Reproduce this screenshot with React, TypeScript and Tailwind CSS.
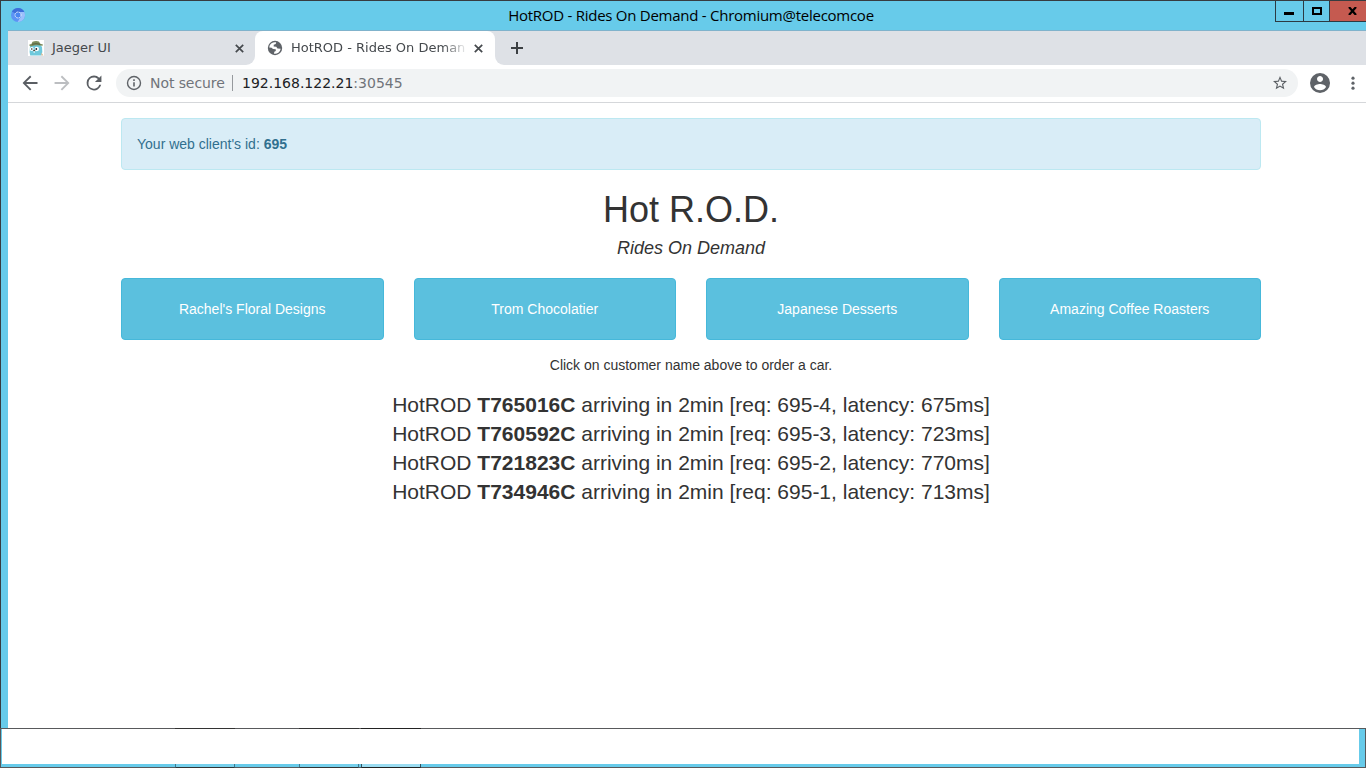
import React from 'react';

const customers = ["Rachel's Floral Designs", 'Trom Chocolatier', 'Japanese Desserts', 'Amazing Coffee Roasters'];

const rides = [
  { car: 'T765016C', req: '695-4', latency: 675 },
  { car: 'T760592C', req: '695-3', latency: 723 },
  { car: 'T721823C', req: '695-2', latency: 770 },
  { car: 'T734946C', req: '695-1', latency: 713 },
];

function ChromiumIcon() {
  return (
    <svg className="ml-[10px] mt-[7px] size-[14px] shrink-0" viewBox="0 0 14 14">
      <circle cx="7" cy="7" r="7" fill="#5b93f5" />
      <path d="M7 7 L.9 3.6 A7 7 0 0 1 13.3 4 Z" fill="#3d6fd9" />
      <path d="M7 4 H13.3 A7 7 0 0 1 6.6 14 L10 8.5 Z" fill="#9cc0fb" />
      <circle cx="7" cy="7" r="3" fill="#4a86f0" stroke="#e6effd" strokeWidth="1" strokeDasharray="1.6 .8" />
    </svg>
  );
}

function GopherIcon() {
  return (
    <svg className="size-4 shrink-0" viewBox="0 0 16 16">
      <rect width="16" height="16" fill="#fff" />
      <path d="M2 6 L3 4.5 H12 L14 7 L14.3 12 L13.4 15.6 H2.2 L1.6 12 Z" fill="#6fc9dc" />
      <path d="M.8 5 L3.6 3.8 L4.5 1.7 Q8 .4 11 1.5 L12.2 3.8 L15 4.6 L14.5 5.8 Q8 4.6 3 6.4 Z" fill="#7d8d5d" />
      <path d="M4 4.3 Q8 3 12.3 4.3" stroke="#55603f" strokeWidth="1" fill="none" />
      <circle cx="3.8" cy="9" r="1.9" fill="#fff" />
      <circle cx="8.8" cy="9" r="2.2" fill="#fff" />
      <circle cx="3.8" cy="9" r=".8" fill="#222" />
      <circle cx="8.3" cy="9" r=".9" fill="#222" />
      <ellipse cx="6.2" cy="10.6" rx="1.1" ry=".8" fill="#514539" />
      <rect x="5.5" y="11.3" width="1.4" height="1.3" fill="#fff" />
      <path d="M13.3 12.5 L15.6 15.6 H13.3 Z" fill="#d9b994" />
    </svg>
  );
}

function CloseIcon() {
  return (
    <svg className="size-[9px] shrink-0" viewBox="0 0 9 9">
      <path d="M.8 .8 L8.2 8.2 M8.2 .8 L.8 8.2" stroke="#45494d" strokeWidth="1.7" />
    </svg>
  );
}

function TabStrip() {
  return (
    <div className="flex h-[34px] bg-white font-['DejaVu_Sans',sans-serif] text-[13px] text-[#45494d]">
      <div className="flex w-[247px] items-center rounded-br-[9px] bg-[#dee1e6] pl-5 pr-[11px]">
        <GopherIcon />
        <span className="ml-2 flex-1 whitespace-nowrap">Jaeger UI</span>
        <CloseIcon />
      </div>
      <div className="w-60 bg-[#dee1e6]">
        <div className="flex h-full items-center rounded-t-[8px] bg-white pl-3 pr-3">
          <svg className="size-4 shrink-0" viewBox="0 0 16 16">
            <circle cx="8" cy="8" r="7.2" fill="#5f6368" />
            <path d="M9.2 2.3 L8.7 4.1 L6.7 4.8 L6.7 6.5 L9.3 6.8 L10.5 8.6 L13.7 8.8 A5.8 5.8 0 0 1 7 13.7 L7.3 11.8 L8.8 11 L8.7 9.3 L6 9.1 L4.6 7.8 L2.2 7.6 A5.8 5.8 0 0 1 9.2 2.3 Z" fill="#fff" />
          </svg>
          <span className="ml-2 w-[175px] overflow-hidden whitespace-nowrap [mask-image:linear-gradient(to_right,#000_152px,transparent_177px)]">
            HotROD - Rides On Demand
          </span>
          <span className="ml-auto flex"><CloseIcon /></span>
        </div>
      </div>
      <div className="flex flex-1 items-center rounded-bl-[9px] bg-[#dee1e6] pl-4">
        <svg className="size-3" viewBox="0 0 12 12">
          <path d="M6 0 V12 M0 6 H12" stroke="#3c4043" strokeWidth="2" />
        </svg>
      </div>
    </div>
  );
}

function Toolbar() {
  return (
    <div className="flex h-[38px] items-center border-b border-[#d5d7da] bg-white pb-px font-['DejaVu_Sans',sans-serif] text-[14px]">
      <svg className="ml-3 size-5 shrink-0" viewBox="0 0 24 24" fill="#5a5e63">
        <path d="M20 11H7.83l5.59-5.59L12 4l-8 8 8 8 1.41-1.41L7.83 13H20z" transform="translate(-1.4 -1.4) scale(1.12)" />
      </svg>
      <svg className="ml-3 size-5 shrink-0" viewBox="0 0 24 24" fill="#bcbec1">
        <path d="M12 4l-1.41 1.41L16.17 11H4v2h12.17l-5.58 5.59L12 20l8-8z" transform="translate(-1.4 -1.4) scale(1.12)" />
      </svg>
      <svg className="ml-3 size-5 shrink-0" viewBox="0 0 24 24" fill="#5a5e63">
        <path d="M17.65 6.35A7.96 7.96 0 0 0 12 4a8 8 0 1 0 7.73 10h-2.08A6 6 0 1 1 12 6c1.66 0 3.14.69 4.22 1.78L13 11h7V4z" transform="translate(-1.3 -1.3) scale(1.11)" />
      </svg>
      <div className="ml-3 flex h-7 w-[1182px] shrink-0 items-center rounded-full bg-[#f1f3f4] pl-2.5 pr-2.5">
        <svg className="size-4 shrink-0" viewBox="0 0 16 16">
          <circle cx="8" cy="8" r="6.5" fill="none" stroke="#5f6368" strokeWidth="1.4" />
          <path d="M7.2 7.2 H8.8 V11.6 H7.2 Z M7.2 4.3 H8.8 V5.9 H7.2 Z" fill="#5f6368" />
        </svg>
        <span className="ml-2 w-[82px] whitespace-nowrap tracking-[-0.08px] text-[#70747a]">Not secure</span>
        <span className="h-4 w-px bg-[#96999d]" />
        <span className="ml-[9px] flex-1 text-[#202124]">192.168.122.21<span className="text-[#70747a]">:30545</span></span>
        <svg className="size-4 shrink-0" viewBox="0 0 24 24" fill="#5a5e63">
          <path transform="translate(-.6 -.6) scale(1.05)" d="M22 9.24l-7.19-.62L12 2 9.19 8.63 2 9.24l5.46 4.73L5.82 21 12 17.27 18.18 21l-1.63-7.03zM12 15.4l-3.76 2.27 1-4.28-3.32-2.88 4.38-.38L12 6.1l1.71 4.04 4.38.38-3.32 2.88 1 4.28z" />
        </svg>
      </div>
      <svg className="ml-[11px] size-[22px] shrink-0" viewBox="2 2 20 20" fill="#5f6368">
        <path transform="translate(1.1 1.1) scale(.91)" d="M12 2a10 10 0 1 0 0 20 10 10 0 0 0 0-20zm0 3c1.66 0 3 1.34 3 3s-1.34 3-3 3-3-1.34-3-3 1.34-3 3-3zm0 14.2a7.2 7.2 0 0 1-6-3.22c.03-1.99 4-3.08 6-3.08s5.97 1.09 6 3.08a7.2 7.2 0 0 1-6 3.22z" />
      </svg>
      <svg className="ml-[19.5px] h-4 w-1 shrink-0" viewBox="0 0 4 16" fill="#5f6368">
        <circle cx="2" cy="3.2" r="1.6" />
        <circle cx="2" cy="8.2" r="1.6" />
        <circle cx="2" cy="13.2" r="1.6" />
      </svg>
    </div>
  );
}

function TitleBar() {
  return (
    <div className="flex h-[29px] shrink-0">
      <ChromiumIcon />
      <div className="flex h-[29px] flex-1 items-center justify-center pl-[82px] font-['Open_Sans','Noto_Sans',sans-serif] text-[15px] tracking-[-0.26px] text-black">
        <span className="whitespace-nowrap">HotROD - Rides On Demand - Chromium@telecomcoe</span>
      </div>
      <div className="flex h-[21px] w-[91px] border-b border-l border-[#2c3a42]">
        <div className="flex w-7 border-r border-[#2c3a42] pl-2 pt-[11px]">
          <span className="h-[3px] w-[10px] bg-black" />
        </div>
        <div className="flex w-[26px] justify-center border-r border-[#2c3a42] pt-[6px]">
          <span className="h-2 w-[10px] border-2 border-black" />
        </div>
        <div className="flex flex-1 bg-[#c55a50] pl-[18px] pt-[6px]">
          <svg className="h-2 w-[9px]" viewBox="0 0 9 8">
            <path d="M1 0 L8 8 M8 0 L1 8" stroke="#000" strokeWidth="2.2" />
          </svg>
        </div>
      </div>
    </div>
  );
}

function HotRodPage() {
  return (
    <main className="flex-1 bg-white pl-[113px] pr-[105px] pt-[15px] text-center font-['Liberation_Sans',Arial,sans-serif] text-[14px] leading-5 text-[#333]">
      <div className="h-[52px] rounded border border-[#bce8f1] bg-[#d9edf7] p-[15px] text-left text-[#31708f]">
        Your web client's id: <strong>695</strong>
      </div>
      <h1 className="mt-5 text-[36px] leading-[40px]">Hot R.O.D.</h1>
      <h4 className="mt-2 text-[18px] italic leading-5">Rides On Demand</h4>
      <div className="mt-5 grid grid-cols-4 gap-[30px]">
        {customers.map((name) => (
          <button key={name} className="h-[62px] rounded border border-[#46b8da] bg-[#5bc0de] text-white">{name}</button>
        ))}
      </div>
      <p className="mt-[15px]">Click on customer name above to order a car.</p>
      <div className="mt-[15px] text-[21px] leading-[29px]">
        {rides.map((r) => (
          <div key={r.car}>
            HotROD <b>{r.car}</b> arriving in 2min [req: {r.req}, latency: {r.latency}ms]
          </div>
        ))}
      </div>
    </main>
  );
}

function BottomWindow() {
  return (
    <div className="flex h-10 flex-col bg-[#67cbea]">
      <div className="flex h-px bg-[#58595b]">
        <span className="ml-[175px] w-[60px] bg-[#333]" />
        <span className="ml-16 w-[60px] bg-[#333]" />
        <span className="ml-0.5 w-[60px] bg-[#222]" />
      </div>
      <div className="flex flex-1 flex-col border-x border-b border-[#58595b]">
        <div className="ml-px mr-[6px] h-[35px] bg-white" />
        <div className="-mb-px flex flex-1">
          <span className="ml-[174px] w-[60px] border-x border-b border-x-[#42798e] border-b-[#333] bg-[#76d0ec]" />
          <span className="ml-16 w-[60px] border-x border-b border-x-[#42798e] border-b-[#333] bg-[#76d0ec]" />
          <span className="ml-0.5 w-[60px] border-x border-b border-x-[#35515d] border-b-[#222] bg-[#9bdcf1]" />
        </div>
      </div>
    </div>
  );
}

export default function App() {
  return (
    <div className="flex h-screen w-screen flex-col overflow-hidden">
      <div className="flex min-h-0 flex-1 flex-col border-l border-t border-[#373c40] bg-[#67cbea]">
        <TitleBar />
        <div className="ml-[7px] flex flex-1 flex-col border-t border-[#80b3cc]">
          <TabStrip />
          <Toolbar />
          <HotRodPage />
        </div>
      </div>
      <BottomWindow />
    </div>
  );
}
